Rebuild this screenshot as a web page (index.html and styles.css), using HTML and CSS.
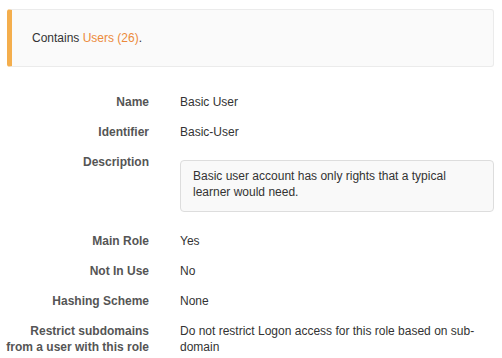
FILE: index.html
```html
<!DOCTYPE html>
<html lang="en">
<head>
    <meta charset="UTF-8">
    <title>Role Details</title>
    <link rel="stylesheet" href="styles.css">
</head>
<body>
    <section class="container">
        <div class="callout">
            Contains <a href="#" class="link">Users (26)</a>.
        </div>

        <dl class="details">
            <div class="row">
                <dt>Name</dt>
                <dd>Basic User</dd>
            </div>
            <div class="row">
                <dt>Identifier</dt>
                <dd>Basic-User</dd>
            </div>
            <div class="row">
                <dt>Description</dt>
                <dd>
                    <div class="well">
                        Basic user account has only rights that a typical learner would need.
                    </div>
                </dd>
            </div>
            <div class="row">
                <dt>Main Role</dt>
                <dd>Yes</dd>
            </div>
            <div class="row">
                <dt>Not In Use</dt>
                <dd>No</dd>
            </div>
            <div class="row">
                <dt>Hashing Scheme</dt>
                <dd>None</dd>
            </div>
            <div class="row">
                <dt>Restrict subdomains from a user with this role</dt>
                <dd>Do not restrict Logon access for this role based on sub-domain</dd>
            </div>
        </dl>
    </section>
</body>
</html>
```

FILE: styles.css
```css
* {
    box-sizing: border-box;
}

html, body {
    margin: 0;
    background: #fff;
}

body {
    font-family: 'Liberation Sans', Arial, sans-serif;
    font-size: 12px;
    line-height: 16px;
    color: #333;
}

.container {
    padding: 9px 8px 0 7px;
}

.callout {
    background-color: #fafafa;
    border: 1px solid #ebebeb;
    border-left: 5px solid #f4ae4d;
    border-radius: 3px;
    padding: 20px;
}

.link {
    color: #ec8a3a;
    text-decoration: none;
}

.details {
    margin: 27px 0 0 -2px;
}

.details .row {
    display: grid;
    grid-template-columns: 144px 1fr;
    column-gap: 31px;
    margin-bottom: 14px;
}

.details dt {
    font-weight: bold;
    color: #555;
    text-align: right;
}

.details dd {
    margin: 0;
    color: #333;
}

.well {
    margin: 6px 0 7px 0;
    background-color: #f9f9f9;
    border: 1px solid #ddd;
    border-radius: 4px;
    padding: 7px 12px 11px 12px;
}
```
